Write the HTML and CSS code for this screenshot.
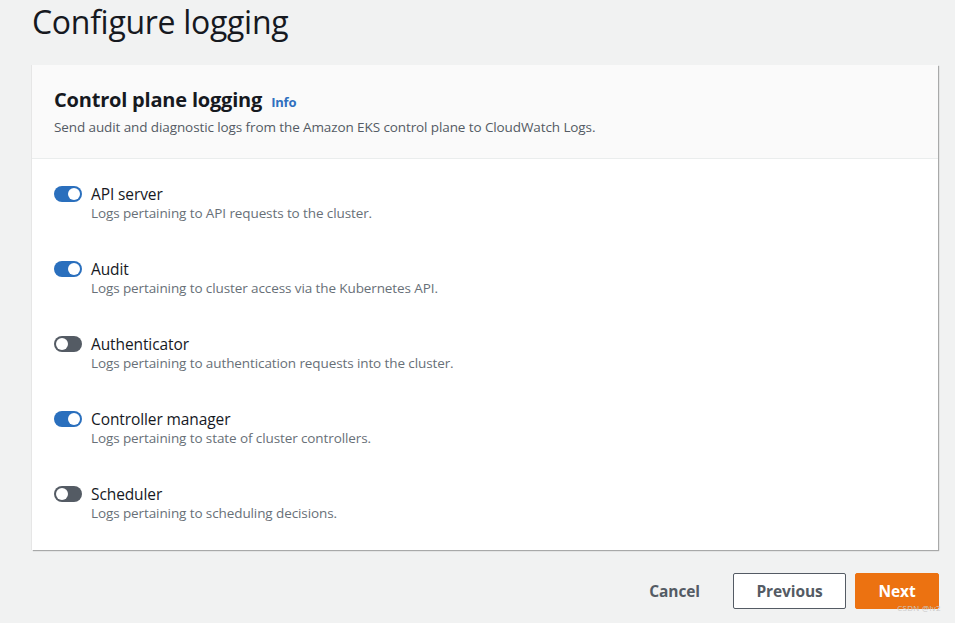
FILE: index.html
```html
<!DOCTYPE html>
<html>
<head>
    <meta charset="UTF-8">
    <title>Configure logging</title>
    <link rel="stylesheet" href="styles.css">
</head>
<body>
    <h1 class="page-title">Configure logging</h1>

    <div class="card">
        <div class="card-header">
            <h2>Control plane logging <a class="info-link" href="#">Info</a></h2>
            <p>Send audit and diagnostic logs from the Amazon EKS control plane to CloudWatch Logs.</p>
        </div>
        <div class="card-body">
            <div class="log-row">
                <span class="toggle on"></span>
                <div class="log-text">
                    <div class="log-name">API server</div>
                    <div class="log-desc">Logs pertaining to API requests to the cluster.</div>
                </div>
            </div>
            <div class="log-row">
                <span class="toggle on"></span>
                <div class="log-text">
                    <div class="log-name">Audit</div>
                    <div class="log-desc">Logs pertaining to cluster access via the Kubernetes API.</div>
                </div>
            </div>
            <div class="log-row">
                <span class="toggle"></span>
                <div class="log-text">
                    <div class="log-name">Authenticator</div>
                    <div class="log-desc">Logs pertaining to authentication requests into the cluster.</div>
                </div>
            </div>
            <div class="log-row">
                <span class="toggle on"></span>
                <div class="log-text">
                    <div class="log-name">Controller manager</div>
                    <div class="log-desc">Logs pertaining to state of cluster controllers.</div>
                </div>
            </div>
            <div class="log-row">
                <span class="toggle"></span>
                <div class="log-text">
                    <div class="log-name">Scheduler</div>
                    <div class="log-desc">Logs pertaining to scheduling decisions.</div>
                </div>
            </div>
        </div>
    </div>

    <div class="actions">
        <button class="btn btn-link">Cancel</button>
        <button class="btn btn-normal">Previous</button>
        <button class="btn btn-primary">Next</button>
    </div>
    <span class="watermark">CSDN @lv2</span>
</body>
</html>
```

FILE: styles.css
```css
body {
    font-family: 'Open Sans', 'Noto Sans', sans-serif;
    margin: 0;
    padding: 0 16px 0 32px;
    background: #f1f2f2;
    color: #16191f;
    position: relative;
    height: 623px;
    overflow: hidden;
}

.page-title {
    margin: 0;
    font-size: 32px;
    font-weight: 400;
    line-height: 44px;
    letter-spacing: -0.3px;
    color: #16191f;
}

.card {
    margin-top: 21px;
    width: 906px;
    background: #fff;
    box-shadow: 1px 1px 1px rgba(0, 0, 0, 0.3), -1px 0 0 #e6e6e6;
}

.card-header {
    background: #fafafa;
    border-bottom: 1px solid #eaeded;
    padding: 24px 22px 22px;
}

.card-header h2 {
    margin: 0;
    font-size: 20px;
    font-weight: 700;
    line-height: 22px;
    letter-spacing: -0.2px;
}

.info-link {
    font-size: 13px;
    font-weight: 700;
    color: #2f6fbf;
    text-decoration: none;
    margin-left: 4px;
}

.card-header p {
    margin: 6px 0 0;
    font-size: 13.5px;
    line-height: 17px;
    color: #545b64;
    letter-spacing: -0.1px;
}

.card-body {
    padding: 24px 22px 28px;
}

.log-row {
    display: flex;
    align-items: flex-start;
    gap: 9px;
    height: 75px;
}

.log-row:last-child {
    height: auto;
}

.toggle {
    position: relative;
    width: 28px;
    height: 16px;
    border-radius: 8px;
    background: #545b64;
    margin-top: 3px;
    flex-shrink: 0;
}

.toggle::after {
    content: "";
    position: absolute;
    top: 2px;
    left: 2px;
    width: 12px;
    height: 12px;
    border-radius: 50%;
    background: #fff;
}

.toggle.on {
    background: #2a6fbd;
}

.toggle.on::after {
    left: 14px;
}

.log-name {
    font-size: 15.5px;
    line-height: 22px;
    letter-spacing: -0.1px;
}

.log-desc {
    font-size: 13.5px;
    line-height: 17px;
    color: #687078;
    letter-spacing: -0.1px;
}

.actions {
    display: flex;
    justify-content: flex-end;
    align-items: center;
    gap: 9px;
    width: 907px;
    margin-top: 23px;
}

.btn {
    font-family: inherit;
    font-size: 15.5px;
    font-weight: 700;
    height: 36px;
    padding: 0 22px;
    border-radius: 2px;
    cursor: pointer;
    letter-spacing: -0.1px;
}

.btn-link {
    background: none;
    border: none;
    color: #545b64;
    margin-right: 2px;
}

.btn-normal {
    background: #fff;
    border: 1px solid #545b64;
    color: #545b64;
    width: 113px;
}

.btn-primary {
    background: #ec7211;
    border: 1px solid #ec7211;
    color: #fff;
    width: 84px;
}

.watermark {
    position: absolute;
    right: 14px;
    bottom: 10px;
    font-size: 8px;
    color: #c9c9c9;
    letter-spacing: 0.3px;
}
```
